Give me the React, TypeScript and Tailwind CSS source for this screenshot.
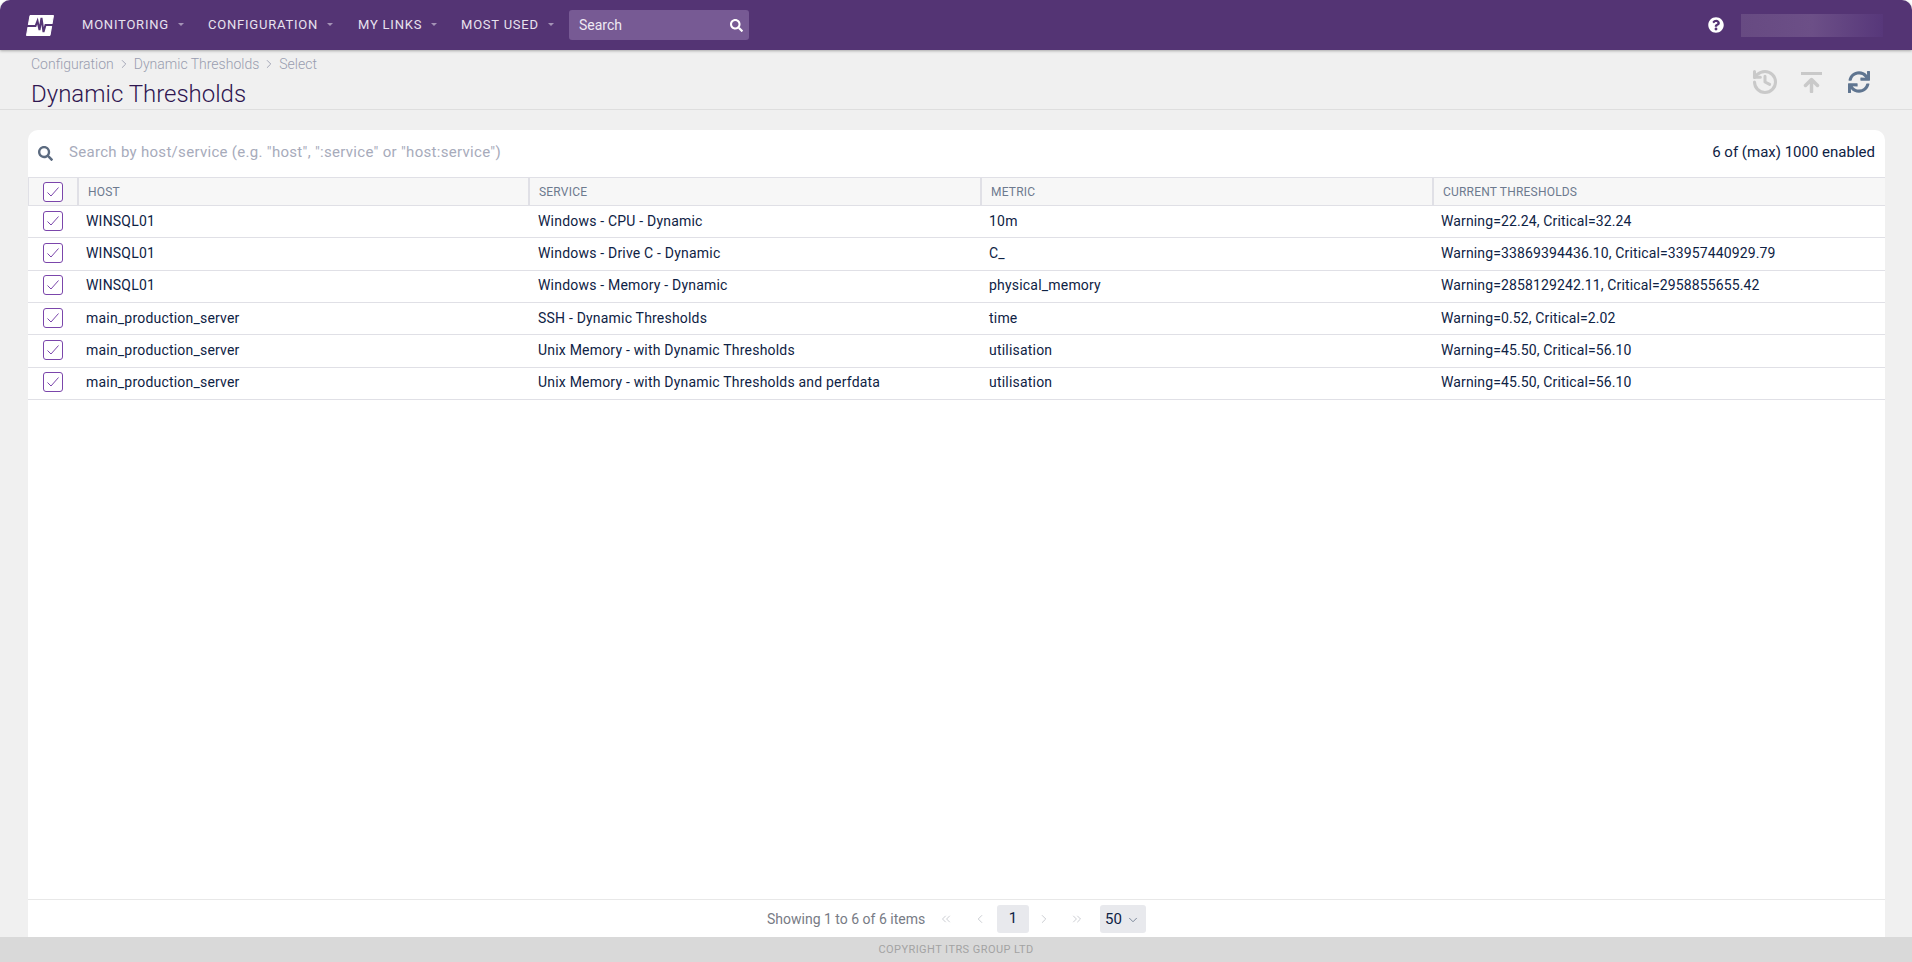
import React from "react";
import { FaQuestionCircle, FaSearch, FaSync } from "react-icons/fa";
import { ChevronDown, ChevronLeft, ChevronRight, ChevronsLeft, ChevronsRight, History } from "lucide-react";

const rows = [
  ["WINSQL01", "Windows - CPU - Dynamic", "10m", "Warning=22.24, Critical=32.24"],
  ["WINSQL01", "Windows - Drive C - Dynamic", "C_", "Warning=33869394436.10, Critical=33957440929.79"],
  ["WINSQL01", "Windows - Memory - Dynamic", "physical_memory", "Warning=2858129242.11, Critical=2958855655.42"],
  ["main_production_server", "SSH - Dynamic Thresholds", "time", "Warning=0.52, Critical=2.02"],
  ["main_production_server", "Unix Memory - with Dynamic Thresholds", "utilisation", "Warning=45.50, Critical=56.10"],
  ["main_production_server", "Unix Memory - with Dynamic Thresholds and perfdata", "utilisation", "Warning=45.50, Critical=56.10"],
];

const menus = [
  { label: "MONITORING", cls: "w-[126px]" },
  { label: "CONFIGURATION", cls: "w-[150px]" },
  { label: "MY LINKS", cls: "w-[103px]" },
  { label: "MOST USED", cls: "w-[108px]" },
];

const Check = () => (
  <span className="flex h-5 w-5 items-center justify-center rounded-[3px] border-[1.5px] border-[#7b46ab] bg-white">
    <svg viewBox="0 0 14 14" className="h-3.5 w-3.5 text-[#7b46ab]" fill="none" stroke="currentColor" strokeWidth="1">
      <path d="M1.5 7.5 5 11 12.5 2.5" />
    </svg>
  </span>
);

const Logo = () => (
  <svg viewBox="0 0 28 21" className="h-[21px] w-7">
    <path d="M4 0.5H27.5L24 20.5H0.5Z" fill="#fff" stroke="#fff" strokeLinejoin="round" />
    <path
      d="M1 11H9.5L11.5 6 13.5 15 15.5 3 17.5 17 19.5 10H27"
      fill="none"
      stroke="#543474"
      strokeWidth="2"
    />
  </svg>
);

const UploadIcon = () => (
  <svg viewBox="0 0 21 21" className="h-[21px] w-[21px] text-[#c9c9c9]" fill="none" stroke="currentColor">
    <path d="M0 1.5H21" strokeWidth="3" />
    <path d="M10.5 19.5V8M4.5 13.5l6-6 6 6" strokeWidth="3.5" strokeLinecap="round" strokeLinejoin="round" />
  </svg>
);

export default function App() {
  return (
    <div className="flex h-[962px] w-[1912px] flex-col overflow-hidden bg-[#f0f0f0] font-['Roboto',sans-serif] text-sm text-[#0e2244]">
      <div className="bg-white">
        <nav className="relative flex h-[50px] items-center rounded-t-[10px] bg-[#543474] pl-[26px] pr-[29px] shadow-[0_1px_3px_rgba(0,0,0,0.3)]">
          <Logo />
          <div className="ml-[28px] flex">
            {menus.map((m) => (
              <div key={m.label} className={`flex items-center text-[13px] font-normal tracking-[0.06em] text-[#e8e2ee] ${m.cls}`}>
                {m.label}
                <span className="ml-[9px] mb-[2px] h-0 w-0 border-x-[3px] border-t-[3px] border-x-transparent border-t-[#a493b6]" />
              </div>
            ))}
          </div>
          <div className="flex h-[30px] w-[180px] items-center justify-between rounded-[3px] bg-[#775a94] pl-[10px] pr-[6px] text-sm text-[#eee9f3]">
            <span>Search</span>
            <FaSearch className="h-[13px] w-[13px] text-white" />
          </div>
          <div className="ml-auto flex items-center gap-[17px]">
            <FaQuestionCircle className="h-4 w-4 text-white" />
            <div className="h-[23px] w-[142px] bg-linear-to-r from-[#674a82] via-[#6c4f87] to-[#57377a]" />
          </div>
        </nav>
      </div>

      <header className="flex h-[60px] shrink-0 justify-between border-b border-[#dedede] pl-[31px] pr-[42px]">
        <div>
          <div className="mt-[5px] flex items-center text-sm font-light leading-[18px] text-[#999daf]">
            Configuration
            <ChevronRight className="mx-[3px] h-3.5 w-3.5" strokeWidth={1.5} />
            Dynamic Thresholds
            <ChevronRight className="mx-[3px] h-3.5 w-3.5" strokeWidth={1.5} />
            Select
          </div>
          <h1 className="mt-[7px] text-2xl font-light leading-7 text-[#2f1650]">Dynamic Thresholds</h1>
        </div>
        <div className="mt-[21px] flex h-[22px] items-center">
          <History className="-mx-[2px] h-7 w-7 text-[#c9c9c9]" strokeWidth={2.6} />
          <span className="ml-[24px]"><UploadIcon /></span>
          <FaSync className="ml-[26px] h-[22px] w-[22px] text-[#5f7590]" />
        </div>
      </header>

      <main className="mx-[28px] mb-0 mt-[20px] flex min-h-0 w-[1857px] flex-1 flex-col rounded-t-[10px] bg-white">
        <div className="flex h-[47px] shrink-0 items-center px-[10px] pb-[1px]">
          <FaSearch className="h-[15px] w-[15px] text-[#5c6b80]" />
          <span className="ml-[16px] text-[15px] tracking-[0.3px] text-[#a7abbb]">Search by host/service (e.g. "host", ":service" or "host:service")</span>
          <span className="ml-auto text-[15px]">6 of (max) 1000 enabled</span>
        </div>

        <div className="grid h-[29px] shrink-0 grid-cols-[49px_451px_452px_452px_453px] border-y border-[#e0e0e6] bg-[#f7f7f7] text-xs tracking-[0.2px] text-[#6d7a8f]">
          <div className="flex items-center justify-center border-l border-[#e0e0e6]"><Check /></div>
          {["HOST", "SERVICE", "METRIC", "CURRENT THRESHOLDS"].map((h) => (
            <div key={h} className="flex items-center border-l-2 border-[#e0e0e6] pl-[9px]">{h}</div>
          ))}
        </div>

        <div className="flex-1">
          {rows.map((r, i) => (
            <div key={i} className="grid h-[32.33px] grid-cols-[50px_451px_452px_452px_452px] items-center border-b border-[#e0e0e6] pb-[2px] tracking-[0.2px]">
              <div className="flex justify-center"><Check /></div>
              <div className="pl-[8px]">{r[0]}</div>
              <div className="pl-[9px]">{r[1]}</div>
              <div className="pl-[8px]">{r[2]}</div>
              <div className="pl-[8px] tracking-[0.13px]">{r[3]}</div>
            </div>
          ))}
        </div>

        <div className="flex h-[38px] shrink-0 items-center justify-center border-t border-[#e8e8e8]">
          <span className="w-[158px] whitespace-nowrap text-sm text-[#777b85]">Showing 1 to 6 of 6 items</span>
          <ChevronsLeft className="ml-[14px] h-3.5 w-3.5 text-[#c4c6cc]" strokeWidth={1.5} />
          <ChevronLeft className="ml-[20px] h-3.5 w-3.5 text-[#c4c6cc]" strokeWidth={1.5} />
          <span className="ml-[10px] flex h-7 w-8 items-center justify-center rounded-[3px] bg-[#e8e9ed] text-[15px]">1</span>
          <ChevronRight className="ml-[8px] h-3.5 w-3.5 text-[#c4c6cc]" strokeWidth={1.5} />
          <ChevronsRight className="ml-[19px] h-3.5 w-3.5 text-[#c4c6cc]" strokeWidth={1.5} />
          <span className="ml-[16px] flex h-7 w-[46px] items-center gap-1 rounded-[3px] bg-[#e8e9ed] pl-[5px] pt-[2px] text-[15px]">
            50
            <ChevronDown className="h-3.5 w-3.5 text-[#6d7a8f]" strokeWidth={1.5} />
          </span>
        </div>
      </main>

      <footer className="flex h-[25px] shrink-0 items-center justify-center bg-[#d9d9d9] text-[11px] tracking-[0.04em] text-[#a3a3a3]">
        COPYRIGHT ITRS GROUP LTD
      </footer>
    </div>
  );
}
